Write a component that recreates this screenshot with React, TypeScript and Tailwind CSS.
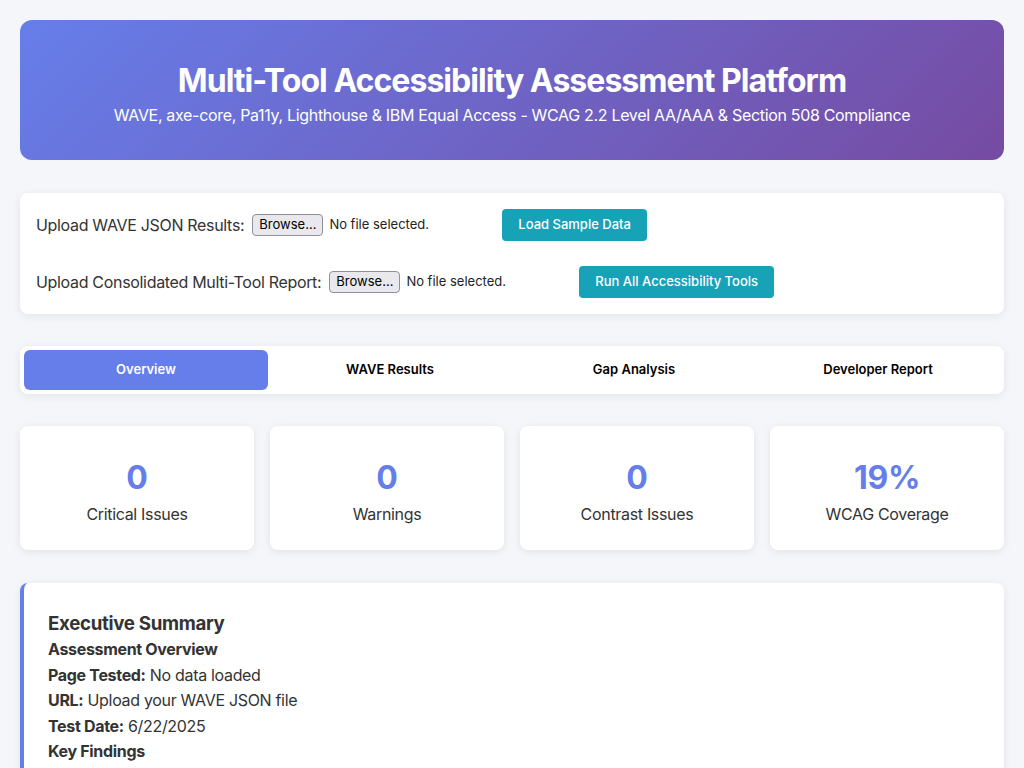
import React from 'react'

const tabs = ['Overview', 'WAVE Results', 'Gap Analysis', 'Developer Report']

const stats = [
  { value: '0', label: 'Critical Issues' },
  { value: '0', label: 'Warnings' },
  { value: '0', label: 'Contrast Issues' },
  { value: '19%', label: 'WCAG Coverage' },
]

function FileField() {
  return (
    <span className="inline-flex items-center w-[244px] mr-[10px] tracking-normal">
      <span className="inline-flex items-center h-[22px] px-[6px] ml-[4px] border border-[#8f8f9d] rounded-[4px] bg-[#e9e9ed] text-[13px] text-black">
        Browse...
      </span>
      <span className="ml-[6px] text-[13px] text-[#222]">No file selected.</span>
    </span>
  )
}

function ActionButton({ children }: { children: React.ReactNode }) {
  return (
    <button className="h-8 px-4 rounded-[4px] bg-[#17a2b8] text-white text-[13px] font-medium tracking-normal">
      {children}
    </button>
  )
}

export default function App() {
  return (
    <div
      className="min-h-screen bg-[#f5f6fa] p-5 text-[#333] flex flex-col gap-8 tracking-[-0.02em]"
      style={{ fontFamily: 'Inter, "Noto Sans", sans-serif' }}
    >
      <header className="mb-[1px] rounded-xl bg-[linear-gradient(135deg,#667eea_0%,#764ba2_100%)] text-white text-center pt-[42px] pb-[35px]">
        <h1 className="text-[32px] leading-[38px] font-bold tracking-[-0.03em]">
          Multi-Tool Accessibility Assessment Platform
        </h1>
        <p className="mt-[6px] text-[16px] leading-[19px]">
          WAVE, axe-core, Pa11y, Lighthouse &amp; IBM Equal Access - WCAG 2.2 Level AA/AAA &amp; Section 508 Compliance
        </p>
      </header>

      <section className="bg-white rounded-lg shadow-[0_2px_8px_rgba(0,0,0,0.08)] p-4 flex flex-col gap-[25px]">
        <div className="flex items-center h-8">
          <span className="text-[16px] mr-[4px]">Upload WAVE JSON Results:</span>
          <FileField />
          <ActionButton>Load Sample Data</ActionButton>
        </div>
        <div className="flex items-center h-8">
          <span className="text-[16px] mr-[4px]">Upload Consolidated Multi-Tool Report:</span>
          <FileField />
          <ActionButton>Run All Accessibility Tools</ActionButton>
        </div>
      </section>

      <nav className="bg-white rounded-lg shadow-[0_2px_8px_rgba(0,0,0,0.08)] p-1 flex tracking-normal">
        {tabs.map((t, i) => (
          <button
            key={t}
            className={`flex-1 h-10 rounded-md text-[13px] font-semibold ${
              i === 0 ? 'bg-[#667eea] text-white' : 'text-black'
            }`}
          >
            {t}
          </button>
        ))}
      </nav>

      <div className="grid grid-cols-4 gap-4">
        {stats.map((s) => (
          <div
            key={s.label}
            className="bg-white rounded-lg shadow-[0_2px_8px_rgba(0,0,0,0.08)] h-[124px] flex flex-col items-center pt-[33px]"
          >
            <div className="text-[32px] leading-[38px] font-bold text-[#667eea]">{s.value}</div>
            <div className="mt-[5px] text-[16px] leading-[24px]">{s.label}</div>
          </div>
        ))}
      </div>

      <section className="mt-[1px] bg-white rounded-lg shadow-[0_2px_8px_rgba(0,0,0,0.08)] border-l-4 border-[#667eea] px-6 pt-[28px] pb-6 text-[16px] leading-[25px]">
        <h3 className="text-[18.7px] font-bold leading-[26px]">Executive Summary</h3>
        <h4 className="font-bold">Assessment Overview</h4>
        <p className="mt-[1px]"><strong>Page Tested:</strong> No data loaded</p>
        <p><strong>URL:</strong> Upload your WAVE JSON file</p>
        <p className="mt-[1px]"><strong>Test Date:</strong> 6/22/2025</p>
        <h4 className="font-bold">Key Findings</h4>
      </section>
    </div>
  )
}
